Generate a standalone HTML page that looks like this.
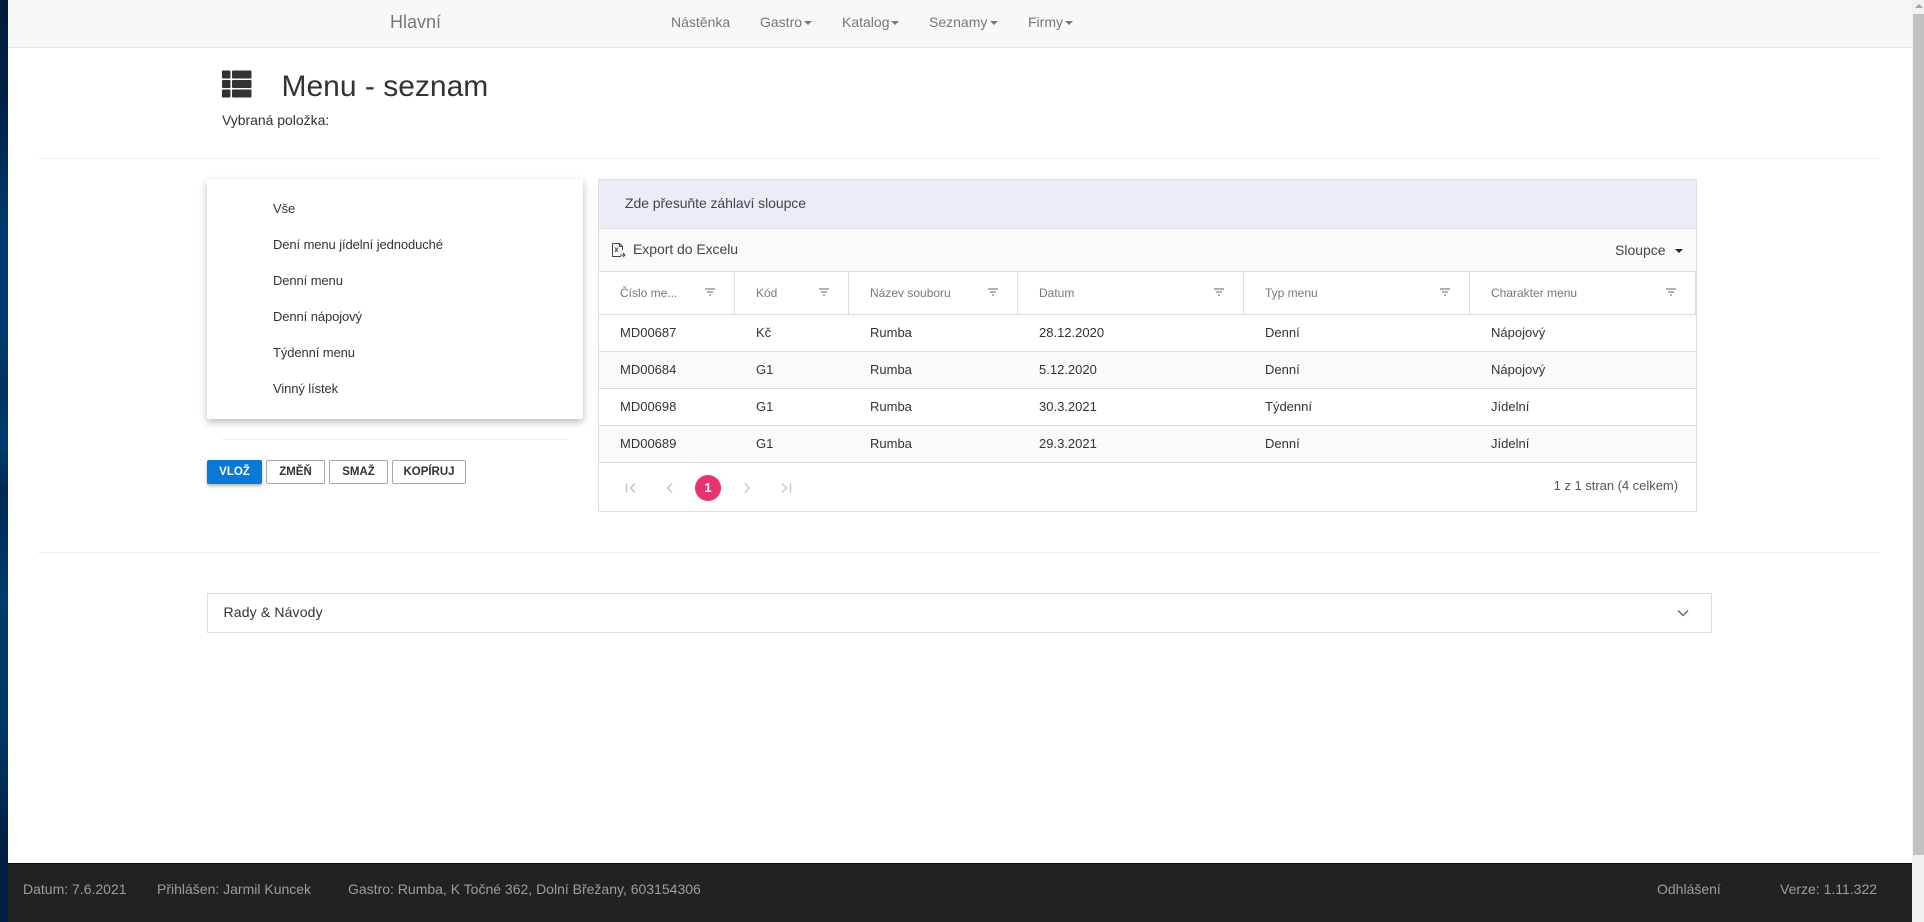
<!DOCTYPE html>
<html lang="cs">
<head>
<meta charset="utf-8">
<title>Menu - seznam</title>
<style>
html,body{margin:0;padding:0;width:1924px;height:922px;overflow:hidden;background:#fff;font-family:"Liberation Sans",sans-serif;}
.a{position:absolute;white-space:nowrap;}
.t{position:absolute;white-space:nowrap;line-height:20px;height:20px;}
#strip{position:absolute;left:0;top:0;width:8px;height:922px;background:linear-gradient(180deg,#001b3a 0%,#00234a 12%,#003a6e 25%,#003c72 35%,#00315f 42%,#003c72 48%,#002a55 53%,#003a6e 65%,#003564 80%,#001f44 92%,#001d40 100%);}
#nav{position:absolute;left:8px;top:0;width:1904px;height:47px;background:#f8f8f8;border-bottom:1px solid #e7e7e7;}
.n{font-size:14px;color:#777;top:12px;}
.c{position:absolute;top:21px;width:0;height:0;border-left:4px solid transparent;border-right:4px solid transparent;border-top:4px solid #777;}
.hr{position:absolute;height:1px;background:#eeeeee;}
#panel{position:absolute;left:207px;top:179px;width:376px;height:240px;background:#fff;box-shadow:0 3px 8px rgba(0,0,0,.28);border-radius:2px;}
.mi{font-size:13px;letter-spacing:-.1px;color:#333;left:273px;}
.b{position:absolute;top:460px;height:24px;box-sizing:border-box;border:1px solid #a8a8a8;border-radius:2px;font-size:11.5px;font-weight:bold;color:#333;text-align:center;line-height:22px;background:#fff;}
#grid{position:absolute;left:598px;top:179px;width:1099px;height:333px;box-sizing:border-box;border:1px solid #dedede;background:#fff;}
.l{position:absolute;background:#dedede;}
.hd{font-size:12px;color:#777;top:283px;}
.cell{font-size:13px;color:#333;}
.f{position:absolute;top:288px;width:10px;height:8px;}
#foot{position:absolute;left:8px;top:863px;width:1904px;height:59px;background:#222;border-top:1px solid #080808;box-sizing:border-box;}
.ft{font-size:14px;color:#9d9d9d;top:879px;}
</style>
</head>
<body>
<div id="strip"></div>
<div class="a" style="left:1912px;top:0;width:12px;height:922px;background:#f1f1f1;"></div>
<div class="a" style="left:1913px;top:14px;width:11px;height:841px;background:#c1c1c1;"></div>
<div class="a" style="left:1915px;top:4px;width:0;height:0;border-left:4px solid transparent;border-right:4px solid transparent;border-bottom:4px solid #a3a3a3;"></div>

<div id="nav"></div>
<div class="t" style="left:390px;top:12px;font-size:18px;color:#777;">Hlavní</div>
<div class="t n" style="left:671px;">Nástěnka</div>
<div class="t n" style="left:760px;">Gastro</div><div class="c" style="left:804px;"></div>
<div class="t n" style="left:842px;">Katalog</div><div class="c" style="left:891px;"></div>
<div class="t n" style="left:929px;">Seznamy</div><div class="c" style="left:990px;"></div>
<div class="t n" style="left:1028px;">Firmy</div><div class="c" style="left:1065px;"></div>

<svg class="a" style="left:222px;top:70px;" width="30" height="28" viewBox="0 0 30 28">
<g fill="#333">
<rect x="0" y="0.5" width="8.500" height="8" rx="1"/><rect x="10" y="0.5" width="19.500" height="8" rx="1"/>
<rect x="0" y="10" width="8.500" height="8" rx="1"/><rect x="10" y="10" width="19.500" height="8" rx="1"/>
<rect x="0" y="19.500" width="8.500" height="8" rx="1"/><rect x="10" y="19.500" width="19.500" height="8" rx="1"/>
</g>
</svg>
<div class="t" style="left:281.500px;top:72px;font-size:30px;line-height:30px;height:30px;color:#333;">Menu - seznam</div>
<div class="t" style="left:222px;top:110px;font-size:14px;letter-spacing:-.03px;color:#333;">Vybraná položka:</div>
<div class="hr" style="left:38px;top:158px;width:1842px;"></div>

<div id="panel"></div>
<div class="t mi" style="top:199px;">Vše</div>
<div class="t mi" style="top:235px;">Dení menu jídelní jednoduché</div>
<div class="t mi" style="top:271px;">Denní menu</div>
<div class="t mi" style="top:307px;">Denní nápojový</div>
<div class="t mi" style="top:343px;">Týdenní menu</div>
<div class="t mi" style="top:379px;">Vinný lístek</div>
<div class="hr" style="left:222px;top:439px;width:346px;"></div>
<div class="b" style="left:207px;width:55px;background:#0a78d7;border-color:#0a78d7;color:#fff;box-shadow:0 2px 3px rgba(0,0,0,.3);">VLOŽ</div>
<div class="b" style="left:266px;width:59px;">ZMĚŇ</div>
<div class="b" style="left:329px;width:59px;">SMAŽ</div>
<div class="b" style="left:392px;width:74px;">KOPÍRUJ</div>

<div id="grid"></div>
<div class="a" style="left:599px;top:180px;width:1097px;height:48px;background:#ebedf6;"></div>
<div class="a" style="left:599px;top:229px;width:1097px;height:42px;background:#fafafa;"></div>
<div class="a" style="left:599px;top:352px;width:1097px;height:36px;background:#fafafa;"></div>
<div class="a" style="left:599px;top:426px;width:1097px;height:36px;background:#fafafa;"></div>
<div class="l" style="left:599px;top:228px;width:1097px;height:1px;"></div>
<div class="l" style="left:599px;top:271px;width:1097px;height:1px;"></div>
<div class="l" style="left:599px;top:314px;width:1097px;height:1px;"></div>
<div class="l" style="left:599px;top:351px;width:1097px;height:1px;"></div>
<div class="l" style="left:599px;top:388px;width:1097px;height:1px;"></div>
<div class="l" style="left:599px;top:425px;width:1097px;height:1px;"></div>
<div class="l" style="left:599px;top:462px;width:1097px;height:1px;"></div>
<div class="l" style="left:734px;top:272px;width:1px;height:42px;"></div>
<div class="l" style="left:848px;top:272px;width:1px;height:42px;"></div>
<div class="l" style="left:1017px;top:272px;width:1px;height:42px;"></div>
<div class="l" style="left:1243px;top:272px;width:1px;height:42px;"></div>
<div class="l" style="left:1469px;top:272px;width:1px;height:42px;"></div>
<div class="l" style="left:1695px;top:272px;width:1px;height:42px;"></div>

<div class="t" style="left:625px;top:193px;font-size:14px;letter-spacing:-.07px;color:#444;">Zde přesuňte záhlaví sloupce</div>
<svg class="a" style="left:612px;top:243px;" width="14" height="15" viewBox="0 0 14 15" fill="none" stroke="#444" stroke-width="1">
<path d="M.5.5H7.500L10.500 3.500V7M.5.5V13.500H9"/><path d="M7.500.5V3.500H10.500"/><path d="M3 4.500L6 9M6 4.500L3 9"/><path d="M8 12H13M11 10L13 12L11 14"/>
</svg>
<div class="t" style="left:633px;top:239px;font-size:14px;letter-spacing:-.05px;color:#444;">Export do Excelu</div>
<div class="t" style="left:1615px;top:240px;font-size:14px;color:#444;">Sloupce</div>
<div class="a" style="left:1675px;top:249px;width:0;height:0;border-left:4px solid transparent;border-right:4px solid transparent;border-top:4px solid #222;"></div>

<div class="t hd" style="left:620px;">Číslo me...</div>
<div class="t hd" style="left:756px;">Kód</div>
<div class="t hd" style="left:870px;">Název souboru</div>
<div class="t hd" style="left:1039px;">Datum</div>
<div class="t hd" style="left:1265px;">Typ menu</div>
<div class="t hd" style="left:1491px;">Charakter menu</div>

<svg class="f" style="left:705px;" viewBox="0 0 10 8"><path d="M0 1H10M2 4H8M4 7H6" stroke="#666" stroke-width="1.100"/></svg>
<svg class="f" style="left:819px;" viewBox="0 0 10 8"><path d="M0 1H10M2 4H8M4 7H6" stroke="#666" stroke-width="1.100"/></svg>
<svg class="f" style="left:988px;" viewBox="0 0 10 8"><path d="M0 1H10M2 4H8M4 7H6" stroke="#666" stroke-width="1.100"/></svg>
<svg class="f" style="left:1214px;" viewBox="0 0 10 8"><path d="M0 1H10M2 4H8M4 7H6" stroke="#666" stroke-width="1.100"/></svg>
<svg class="f" style="left:1440px;" viewBox="0 0 10 8"><path d="M0 1H10M2 4H8M4 7H6" stroke="#666" stroke-width="1.100"/></svg>
<svg class="f" style="left:1666px;" viewBox="0 0 10 8"><path d="M0 1H10M2 4H8M4 7H6" stroke="#666" stroke-width="1.100"/></svg>

<div class="t cell" style="left:620px;top:323px;">MD00687</div><div class="t cell" style="left:756px;top:323px;">Kč</div><div class="t cell" style="left:870px;top:323px;">Rumba</div><div class="t cell" style="left:1039px;top:323px;">28.12.2020</div><div class="t cell" style="left:1265px;top:323px;">Denní</div><div class="t cell" style="left:1491px;top:323px;">Nápojový</div>
<div class="t cell" style="left:620px;top:360px;">MD00684</div><div class="t cell" style="left:756px;top:360px;">G1</div><div class="t cell" style="left:870px;top:360px;">Rumba</div><div class="t cell" style="left:1039px;top:360px;">5.12.2020</div><div class="t cell" style="left:1265px;top:360px;">Denní</div><div class="t cell" style="left:1491px;top:360px;">Nápojový</div>
<div class="t cell" style="left:620px;top:397px;">MD00698</div><div class="t cell" style="left:756px;top:397px;">G1</div><div class="t cell" style="left:870px;top:397px;">Rumba</div><div class="t cell" style="left:1039px;top:397px;">30.3.2021</div><div class="t cell" style="left:1265px;top:397px;">Týdenní</div><div class="t cell" style="left:1491px;top:397px;">Jídelní</div>
<div class="t cell" style="left:620px;top:434px;">MD00689</div><div class="t cell" style="left:756px;top:434px;">G1</div><div class="t cell" style="left:870px;top:434px;">Rumba</div><div class="t cell" style="left:1039px;top:434px;">29.3.2021</div><div class="t cell" style="left:1265px;top:434px;">Denní</div><div class="t cell" style="left:1491px;top:434px;">Jídelní</div>

<svg class="a" style="left:621px;top:478px;" width="180" height="20" viewBox="0 0 180 20" fill="none" stroke="#c4c4c4" stroke-width="1.300">
<path d="M5.500 5.500V14.500M14 5.500L9.500 10L14 14.500"/>
<path d="M51 5.500L46.500 10L51 14.500"/>
<path d="M124 5.500L128.500 10L124 14.500"/>
<path d="M161 5.500L165.500 10L161 14.500M169.500 5.500V14.500"/>
</svg>
<div class="a" style="left:695px;top:475px;width:26px;height:26px;border-radius:50%;background:#e8336f;color:#fff;font-size:13px;font-weight:bold;line-height:26px;text-align:center;">1</div>
<div class="t" style="right:246px;top:476px;font-size:13px;letter-spacing:-.03px;color:#555;">1 z 1 stran (4 celkem)</div>

<div class="hr" style="left:38px;top:552px;width:1842px;"></div>
<div class="a" style="left:207px;top:593px;width:1505px;height:40px;box-sizing:border-box;border:1px solid #dedede;background:#fff;"></div>
<div class="t" style="left:223.500px;top:602px;font-size:14px;letter-spacing:.15px;color:#333;">Rady &amp; Návody</div>
<svg class="a" style="left:1677px;top:609px;" width="12" height="8" viewBox="0 0 12 8" fill="none" stroke="#666" stroke-width="1.400"><path d="M1 1.500L6 6.500L11 1.500"/></svg>

<div id="foot"></div>
<div class="t ft" style="left:23px;">Datum: 7.6.2021</div>
<div class="t ft" style="left:157px;">Přihlášen: Jarmil Kuncek</div>
<div class="t ft" style="left:348px;">Gastro: Rumba, K Točné 362, Dolní Břežany, 603154306</div>
<div class="t ft" style="left:1657px;">Odhlášení</div>
<div class="t ft" style="left:1780px;">Verze: 1.11.322</div>
</body>
</html>
